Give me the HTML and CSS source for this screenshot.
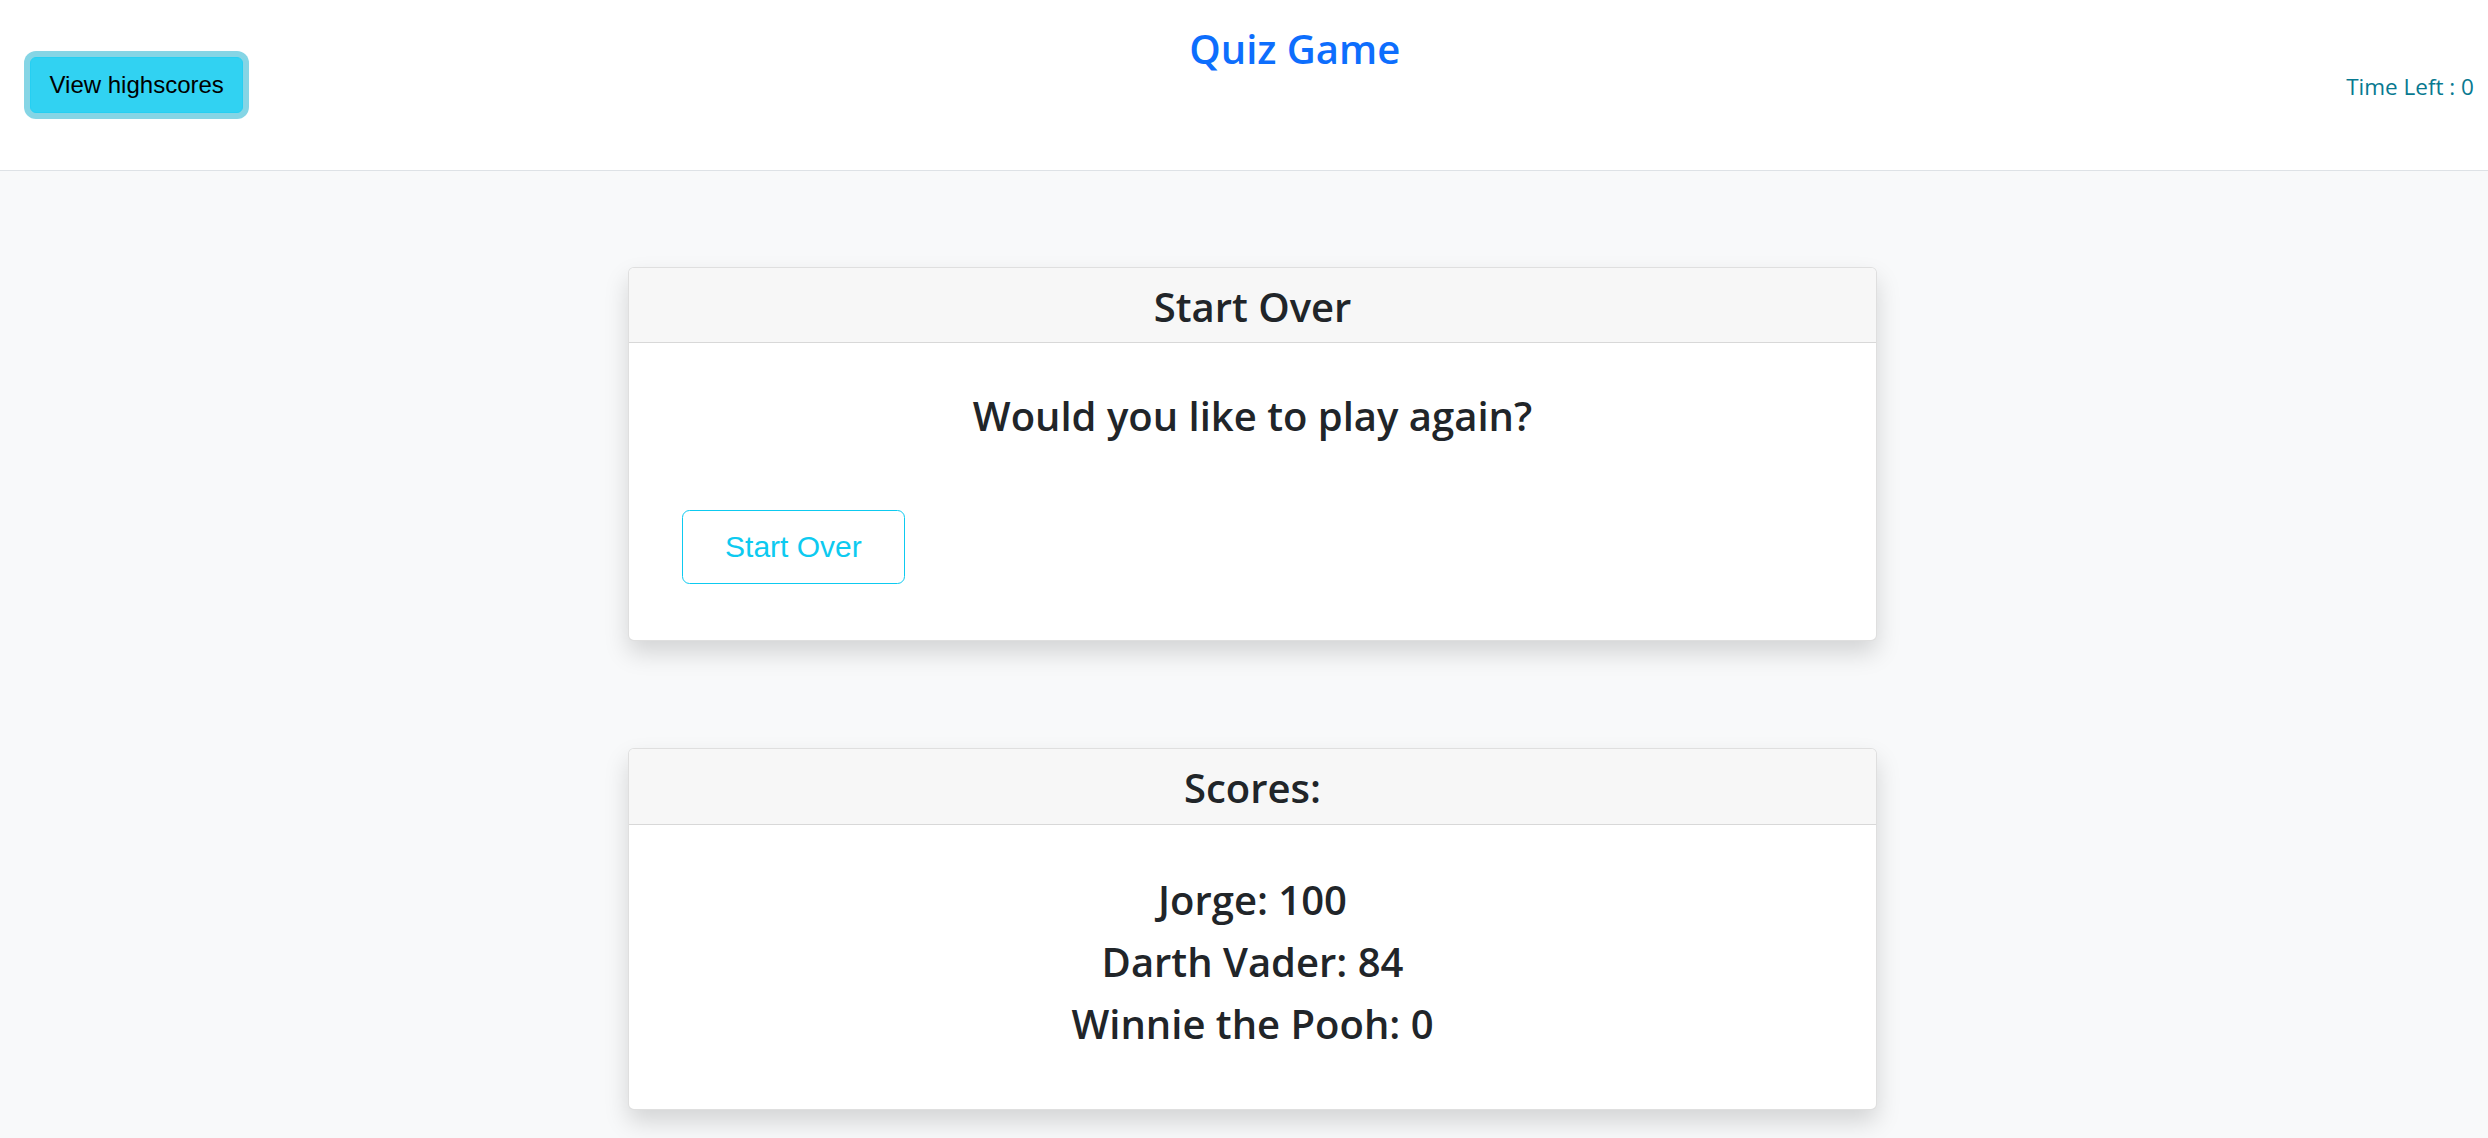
FILE: index.html
```html
<!DOCTYPE html>
<html lang="en">
<head>
<meta charset="utf-8">
<title>Quiz Game</title>
<link rel="stylesheet" href="styles.css">
</head>
<body>
<header class="topbar">
  <button class="btn-highscores" type="button">View highscores</button>
  <h1 class="title">Quiz Game</h1>
  <span class="timer">Time Left : 0</span>
</header>
<main class="content">
  <section class="card card-start">
    <div class="card-header"><h2 class="card-title">Start Over</h2></div>
    <div class="card-body start-body">
      <h3 class="prompt">Would you like to play again?</h3>
      <div class="actions"><button class="btn-outline" type="button">Start Over</button></div>
    </div>
  </section>
  <section class="card card-scores">
    <div class="card-header"><h2 class="card-title">Scores:</h2></div>
    <div class="card-body scores-body">
      <h3 class="score">Jorge: 100</h3>
      <h3 class="score">Darth Vader: 84</h3>
      <h3 class="score">Winnie the Pooh: 0</h3>
    </div>
  </section>
</main>
</body>
</html>
```
FILE: styles.css
```css
html, body {
  margin: 0;
  padding: 0;
}
body {
  background: #f8f9fa;
  font-family: "Open Sans", "Noto Sans", sans-serif;
  color: #212529;
  min-height: 1138px;
}
.topbar {
  background: #ffffff;
  height: 169.5px;
  border-bottom: 1.5px solid #dee2e6;
  display: flex;
  justify-content: space-between;
  align-items: flex-start;
  padding: 0 14px 0 30px;
}
.btn-highscores {
  margin-top: 56.5px;
  font-family: "Liberation Sans", Arial, sans-serif;
  font-size: 24px;
  line-height: 36px;
  padding: 9px 18.5px;
  color: #000;
  background: #31d2f2;
  border: 1.5px solid #25cff2;
  border-radius: 6px;
  box-shadow: 0 0 0 6px rgba(11, 172, 204, 0.5);
}
.title {
  margin: 24px 0 0;
  font-size: 40px;
  line-height: 50.4px;
  font-weight: 600;
  color: #0d6efd;
}
.timer {
  margin-top: 68.5px;
  font-size: 22.5px;
  line-height: 36px;
  color: #087990;
}
.content {
  padding: 96px 0 0 17px;
  display: flex;
  flex-direction: column;
  align-items: center;
  gap: 107px;
}
.card {
  width: 1249px;
  box-sizing: border-box;
  background: #fff;
  border: 1.5px solid rgba(0, 0, 0, 0.125);
  border-radius: 6px;
  box-shadow: 0 12px 24px rgba(0, 0, 0, 0.15);
  overflow: hidden;
}
.card-header {
  background: #f7f7f7;
  border-bottom: 1.5px solid rgba(0, 0, 0, 0.125);
  padding: 14px 24px 10.5px;
  text-align: center;
}
.card-title, .prompt, .score {
  margin: 0;
  font-size: 40px;
  line-height: 50.4px;
  font-weight: 600;
  text-align: center;
}
.start-body {
  padding: 47.5px 52.5px 56px;
}
.actions {
  display: flex;
  margin-top: 68.5px;
}
.btn-outline {
  font-family: "Liberation Sans", Arial, sans-serif;
  font-size: 30px;
  line-height: 45px;
  padding: 13.5px 42.6px;
  color: #0dcaf0;
  background: #fff;
  border: 1.5px solid #0dcaf0;
  border-radius: 7.5px;
}
.scores-body {
  padding: 47.8px 24px 49.8px;
}
.score {
  padding-top: 2.2px;
  margin-bottom: 9.8px;
}
```
